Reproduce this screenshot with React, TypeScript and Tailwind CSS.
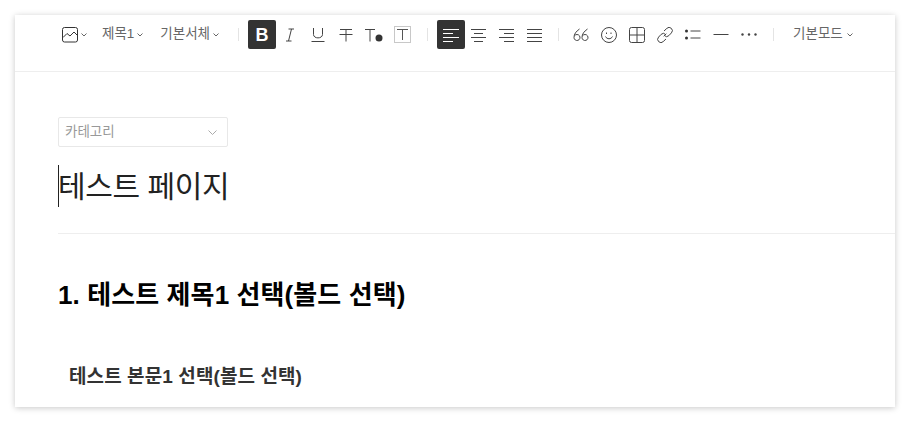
const sans = "font-['Liberation_Sans','Noto_Sans_CJK_KR',sans-serif]"

function Chevron({ className = "" }: { className?: string }) {
  return (
    <svg width="6" height="4" viewBox="0 0 6 4" fill="none" stroke="#666" strokeWidth="1" className={className}>
      <path d="M0.5 0.5 3 3 5.5 0.5" />
    </svg>
  )
}

function Divider({ className = "" }: { className?: string }) {
  return <span className={`h-[13px] w-px shrink-0 bg-[#e4e4e4] ${className}`} />
}

function Tool({ active, children }: { active?: boolean; children: React.ReactNode }) {
  return (
    <button
      type="button"
      className={`flex h-[29px] w-7 shrink-0 items-center justify-center rounded-[2px] ${active ? "bg-[#333333] text-white" : "text-[#444444]"}`}
    >
      {children}
    </button>
  )
}

function Icon({ children, w = 18, h = 18 }: { children: React.ReactNode; w?: number; h?: number }) {
  return (
    <svg width={w} height={h} viewBox={`0 0 ${w} ${h}`} fill="none" stroke="currentColor" strokeWidth="1">
      {children}
    </svg>
  )
}

function Lines({ rows }: { rows: [number, number][] }) {
  return (
    <Icon w={16} h={14}>
      {rows.map(([x1, x2], i) => (
        <path key={i} d={`M${x1} ${1.5 + i * 4}H${x2}`} />
      ))}
    </Icon>
  )
}

function Toolbar() {
  return (
    <div className="flex h-[57px] shrink-0 items-center border-b border-[#eeeeee] pb-[17px] pl-[47px] text-[13.5px] text-[#666666]">
      <svg width="16" height="16" viewBox="0 0 16 16" fill="none" stroke="#333" strokeWidth="1">
        <rect x="0.5" y="0.5" width="15" height="14.5" rx="2" />
        <path d="M1 10.5 5 6.5 8 9 12 5 15 8" />
      </svg>
      <Chevron className="ml-[3px]" />
      <span className="ml-[15px] whitespace-nowrap">제목1</span>
      <Chevron className="ml-[3px]" />
      <span className="ml-[17px] whitespace-nowrap">기본서체</span>
      <Chevron className="ml-[3px]" />
      <Divider className="ml-[19px] mr-[9px]" />

      <Tool active>
        <span className="font-['Liberation_Sans',sans-serif] text-[18px] font-bold leading-none">B</span>
      </Tool>
      <Tool>
        <Icon w={10} h={14}>
          <path d="M3.5 1H9M1 13H6.5M6.5 1 3.5 13" />
        </Icon>
      </Tool>
      <Tool>
        <Icon w={14} h={15}>
          <path d="M2.5 1V7.5C2.5 12 11.5 12 11.5 7.5V1M0.5 14.5H13.5" />
        </Icon>
      </Tool>
      <Tool>
        <Icon w={14} h={14}>
          <path d="M1 1.5H13M0.5 6.5H13.5M7 1.5V13.5" />
        </Icon>
      </Tool>
      <Tool>
        <svg width="18" height="14" viewBox="0 0 18 14" fill="none" stroke="currentColor" strokeWidth="1">
          <path d="M0 1.5H10M5 1.5V13.5" />
          <circle cx="14" cy="10" r="3.5" fill="#333" stroke="none" />
        </svg>
      </Tool>
      <Tool>
        <svg width="17" height="17" viewBox="0 0 17 17" fill="none" stroke="#555" strokeWidth="1">
          <rect x="0.5" y="0.5" width="16" height="16" stroke="#c8c8c8" />
          <path d="M3 3.5H14M8.5 3.5V14" />
        </svg>
      </Tool>
      <Divider className="ml-[11px] mr-[9px]" />

      <Tool active>
        <Lines rows={[[0, 16], [0, 10], [0, 16], [0, 10]]} />
      </Tool>
      <Tool>
        <Lines rows={[[0, 15], [3, 12], [0, 15], [3, 12]]} />
      </Tool>
      <Tool>
        <Lines rows={[[0, 15], [5, 15], [0, 15], [5, 15]]} />
      </Tool>
      <Tool>
        <Lines rows={[[0, 15], [0, 15], [0, 15], [0, 15]]} />
      </Tool>
      <Divider className="ml-[9px] mr-[8px]" />

      <Tool>
        <Icon w={16} h={14}>
          <path d="M6.5 1C3 3.5 1 6 1 9.5A3 3 0 1 0 1.6 7.7M14.5 1C11 3.5 9 6 9 9.5A3 3 0 1 0 9.6 7.7" />
        </Icon>
      </Tool>
      <Tool>
        <Icon w={16} h={16}>
          <circle cx="8" cy="8" r="7.5" />
          <path d="M4.5 9.5C6 12.5 10 12.5 11.5 9.5M5.5 5.5V7M10 5.5V7" />
        </Icon>
      </Tool>
      <Tool>
        <Icon w={16} h={16}>
          <rect x="0.5" y="0.5" width="15" height="15" rx="2" />
          <path d="M8 0.5V15.5M0.5 8H15.5" />
        </Icon>
      </Tool>
      <Tool>
        <Icon w={16} h={16}>
          <path d="M6.7 9.3 9.3 6.7M7 4 9.8 1.4A3.1 3.1 0 0 1 14.4 5.9L11.9 8.6A3.1 3.1 0 0 1 7.4 8.5M9 12 6.2 14.6A3.1 3.1 0 0 1 1.6 10.1L4.1 7.4A3.1 3.1 0 0 1 8.6 7.5" />
        </Icon>
      </Tool>
      <Tool>
        <svg width="16" height="12" viewBox="0 0 16 12" fill="none" stroke="currentColor" strokeWidth="1">
          <circle cx="1.5" cy="2" r="1.5" fill="#333" stroke="none" />
          <circle cx="1.5" cy="9" r="1.5" fill="#333" stroke="none" />
          <path d="M5.5 2H15.5M5.5 9H15.5" />
        </svg>
      </Tool>
      <Tool>
        <Icon w={16} h={4}>
          <path d="M0.5 1.5H15.5" />
        </Icon>
      </Tool>
      <Tool>
        <svg width="16" height="3" viewBox="0 0 16 3" fill="#444">
          <circle cx="1.5" cy="1.5" r="1.2" />
          <circle cx="8" cy="1.5" r="1.2" />
          <circle cx="14.5" cy="1.5" r="1.2" />
        </svg>
      </Tool>
      <Divider className="ml-[10px] mr-[19px]" />
      <span className="whitespace-nowrap">기본모드</span>
      <Chevron className="ml-[4px]" />
    </div>
  )
}

export default function App() {
  return (
    <div className={`h-[422px] w-[910px] overflow-hidden bg-white p-[15px] ${sans}`}>
      <div className="flex h-[392px] w-[880px] flex-col overflow-hidden bg-white shadow-[0_1px_6px_rgba(0,0,0,0.22)]">
        <Toolbar />
        <div className="flex-1 pl-[43px]">
          <div className="mt-[45px] flex h-[30px] w-[170px] items-center justify-between rounded-[2px] border border-[#e8e8e8] pl-[6px] pr-[10px] text-[13.5px] text-[#999999]">
            <span>카테고리</span>
            <svg width="9" height="5" viewBox="0 0 9 5" fill="none" stroke="#aaa" strokeWidth="1">
              <path d="M0.5 0.5 4.5 4.5 8.5 0.5" />
            </svg>
          </div>
          <div className="mt-[18px] flex h-[42px] items-center border-l border-[#222222] pt-[2px] text-[30px] leading-none tracking-[-0.4px] text-[#222222]">
            <span className="-ml-px">테스트 페이지</span>
          </div>
          <div className="mt-[26px] h-px bg-[#eeeeee]" />
          <h1 className="mt-[43px] text-[26px] font-bold leading-[36px] tracking-[0.1px] text-black">
            1. 테스트 제목1 선택(볼드 선택)
          </h1>
          <p className="mt-[52px] pl-[11px] text-[19px] font-bold leading-[24px] tracking-[0.1px] text-[#333333]">
            테스트 본문1 선택(볼드 선택)
          </p>
        </div>
      </div>
    </div>
  )
}
